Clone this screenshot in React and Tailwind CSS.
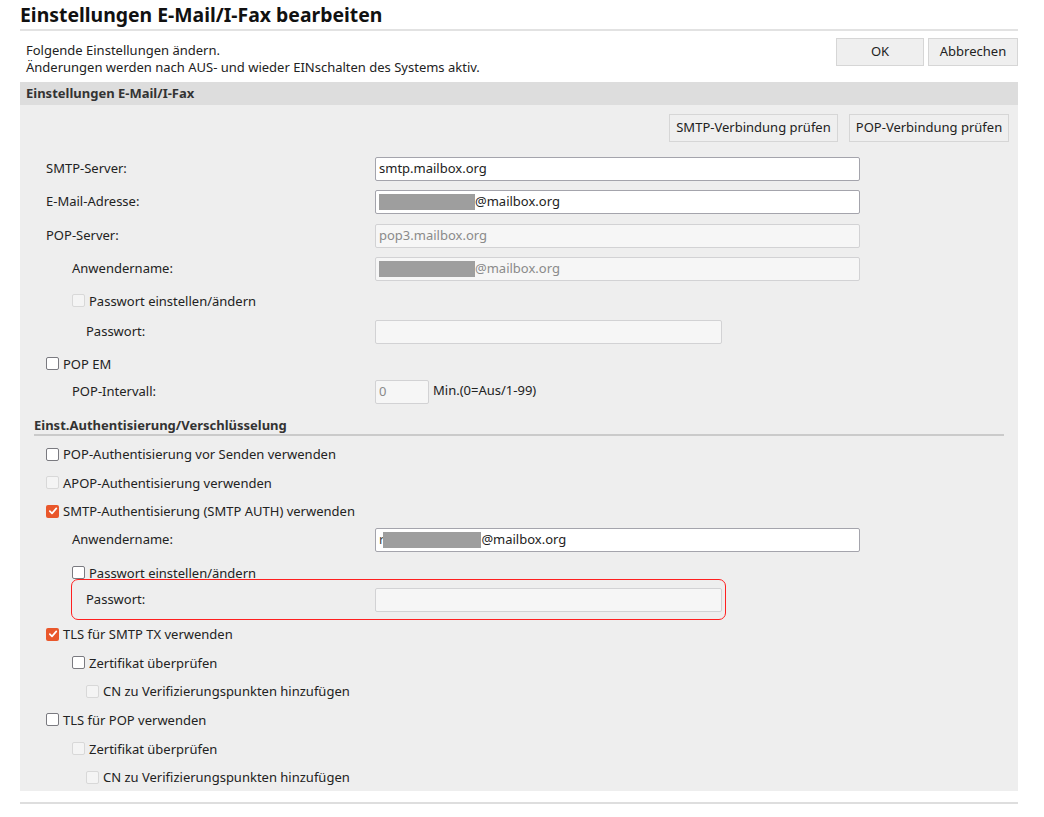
import React from 'react';

function Checkbox({ checked, disabled }) {
  if (checked) {
    return (
      <span className="flex h-[13px] w-[13px] shrink-0 items-center justify-center rounded-[2px] bg-[#e9572b]">
        <svg width="10" height="10" viewBox="0 0 10 10" fill="none">
          <path d="M1.8 5.2 L4 7.4 L8.3 2.4" stroke="white" strokeWidth="1.7" strokeLinecap="round" strokeLinejoin="round" />
        </svg>
      </span>
    );
  }
  return (
    <span
      className={
        disabled
          ? 'block h-[13px] w-[13px] shrink-0 rounded-[2px] border border-[#d8d8d8] bg-[#f4f4f4]'
          : 'block h-[13px] w-[13px] shrink-0 rounded-[2px] border border-[#7a7a80] bg-white'
      }
    />
  );
}

function CheckRow({ label, indent = 'pl-[26px]', h = 'h-[28px]', checked, disabled }) {
  return (
    <div className={`flex items-center gap-[4px] ${indent} ${h}`}>
      <Checkbox checked={checked} disabled={disabled} />
      <span className="leading-[18px]">{label}</span>
    </div>
  );
}

function Redacted({ w = 'w-[96px]' }) {
  return <span className={`inline-block h-[16px] ${w} bg-[#9e9e9e]`} />;
}

function Field({ disabled, w = 'w-[485px]', children }) {
  return (
    <div
      className={
        disabled
          ? `flex h-[24px] ${w} items-center rounded-[2px] border border-[#d2d2d4] bg-[#f6f6f6] px-[3px] text-[#8a8a8a]`
          : `flex h-[24px] ${w} items-center rounded-[2px] border border-[#a4a4ac] bg-white px-[3px] text-[#222]`
      }
    >
      {children}
    </div>
  );
}

function FieldRow({ label, indent = 'pl-[26px]', h = 'h-[33px]', children }) {
  return (
    <div className={`flex items-center ${h}`}>
      <div className={`w-[355px] shrink-0 ${indent}`}>{label}</div>
      {children}
    </div>
  );
}

function Btn({ children, w }) {
  return (
    <button className={`flex items-center justify-center border border-[#d6d6d6] bg-[#efefef] text-[13px] text-[#222] ${w}`}>
      {children}
    </button>
  );
}

export default function App() {
  return (
    <div className="min-h-[817px] bg-white pl-[20px] pr-[26px] text-[13px] text-[#222]" style={{ fontFamily: '"Noto Sans", "Open Sans", sans-serif' }}>
      <h1 className="border-b-2 border-[#e2e2e2] pt-[1px] text-[19.4px] font-bold leading-[28px] text-[#111]">
        Einstellungen E-Mail/I-Fax bearbeiten
      </h1>

      <div className="flex h-[51px] items-start justify-between">
        <div className="pl-[6px] pt-[11px] leading-[17px]">
          <p>Folgende Einstellungen ändern.</p>
          <p>Änderungen werden nach AUS- und wieder EINschalten des Systems aktiv.</p>
        </div>
        <div className="mt-[7px] flex gap-[4px]">
          <Btn w="h-[28px] w-[88px]">OK</Btn>
          <Btn w="h-[28px] w-[90px]">Abbrechen</Btn>
        </div>
      </div>

      <section className="bg-[#eeeeee]">
        <div className="flex h-[23px] items-center bg-[#dddddd] pl-[6px] font-bold text-[#333]">
          Einstellungen E-Mail/I-Fax
        </div>

        <div className="flex justify-end gap-[11px] pr-[9px] pt-[9px]">
          <Btn w="h-[28px] w-[169px]">SMTP-Verbindung prüfen</Btn>
          <Btn w="h-[28px] w-[160px]">POP-Verbindung prüfen</Btn>
        </div>

        <div className="pt-[10px]">
          <FieldRow label="SMTP-Server:" h="h-[33px]">
            <Field>smtp.mailbox.org</Field>
          </FieldRow>
          <FieldRow label="E-Mail-Adresse:" h="h-[34px]">
            <Field>
              <Redacted />
              <span>@mailbox.org</span>
            </Field>
          </FieldRow>
          <FieldRow label="POP-Server:" h="h-[33px]">
            <Field disabled>pop3.mailbox.org</Field>
          </FieldRow>
          <FieldRow label="Anwendername:" indent="pl-[52px]" h="h-[33px]">
            <Field disabled>
              <Redacted />
              <span>@mailbox.org</span>
            </Field>
          </FieldRow>
          <CheckRow label="Passwort einstellen/ändern" indent="pl-[52px]" h="h-[31px]" disabled />
          <FieldRow label="Passwort:" indent="pl-[66px]" h="h-[31px]">
            <Field disabled w="w-[347px]" />
          </FieldRow>
          <CheckRow label="POP EM" h="h-[33px]" />
          <FieldRow label="POP-Intervall:" indent="pl-[52px]" h="h-[24px]">
            <Field disabled w="w-[54px]">0</Field>
            <span className="ml-[4px] -mt-[2px]">Min.(0=Aus/1-99)</span>
          </FieldRow>
        </div>

        <div className="mx-[14px] mt-[12px] border-b-2 border-[#cacaca] font-bold leading-[18px] text-[#333]">
          Einst.Authentisierung/Verschlüsselung
        </div>

        <div className="pt-[4px]">
          <CheckRow label="POP-Authentisierung vor Senden verwenden" h="h-[28px]" />
          <CheckRow label="APOP-Authentisierung verwenden" h="h-[29px]" disabled />
          <CheckRow label="SMTP-Authentisierung (SMTP AUTH) verwenden" h="h-[28px]" checked />
          <FieldRow label="Anwendername:" indent="pl-[52px]" h="h-[29px]">
            <Field>
              <span className="text-[#444]">r</span>
              <span className="-ml-[1px] inline-block h-[16px] w-[98px] bg-[#9e9e9e]" />
              <span>@mailbox.org</span>
            </Field>
          </FieldRow>
          <div className="flex h-[25px] items-start gap-[4px] pl-[52px] pt-[10px]">
            <span className="mt-[2px] flex">
              <Checkbox />
            </span>
            <span className="leading-[18px]">Passwort einstellen/ändern</span>
          </div>
          <div className="ml-[51px] mr-[292px] flex h-[41px] items-center rounded-[7px] border border-[#ff2020] pr-[3px]">
            <div className="w-[303px] shrink-0 pl-[14px]">Passwort:</div>
            <Field disabled w="w-[347px]" />
          </div>
          <CheckRow label="TLS für SMTP TX verwenden" h="h-[28px]" checked />
          <CheckRow label="Zertifikat überprüfen" indent="pl-[52px]" h="h-[29px]" />
          <CheckRow label="CN zu Verifizierungspunkten hinzufügen" indent="pl-[66px]" h="h-[28px]" disabled />
          <CheckRow label="TLS für POP verwenden" h="h-[29px]" />
          <CheckRow label="Zertifikat überprüfen" indent="pl-[52px]" h="h-[29px]" disabled />
          <CheckRow label="CN zu Verifizierungspunkten hinzufügen" indent="pl-[66px]" h="h-[28px]" disabled />
        </div>
      </section>

      <div className="mt-[11px] border-b-2 border-[#dedede]" />
    </div>
  );
}
